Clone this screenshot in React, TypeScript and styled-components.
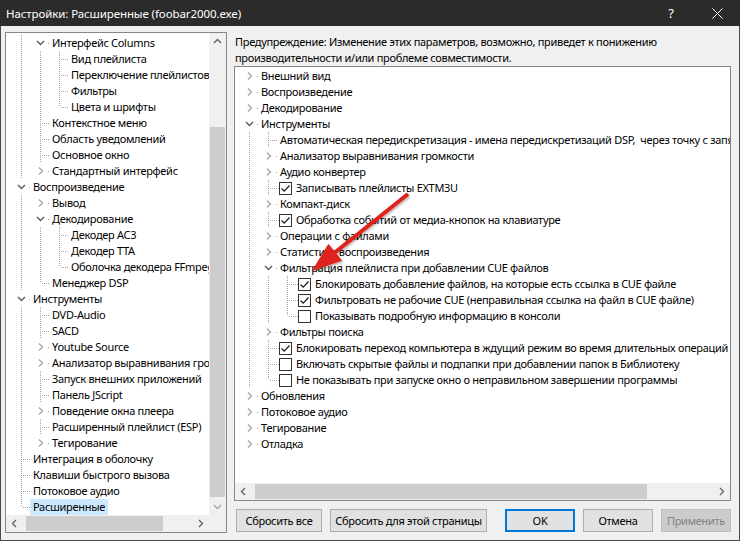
import React from 'react';
import styled, { createGlobalStyle } from 'styled-components';

const FONT = `"Segoe UI", "Noto Sans", "Open Sans", sans-serif`;
const INDENT = 19;

interface RowData {
  t: string;
  l: number;
  open?: boolean;
  closed?: boolean;
  check?: boolean;
  checked?: boolean;
  selected?: boolean;
}

interface GuideRow extends RowData {
  lines: boolean[];
  hasNext: boolean;
  first: boolean;
}

const leftRows: RowData[] = [
  { t: 'Интерфейс Columns', l: 1, open: true },
  { t: 'Вид плейлиста', l: 2 },
  { t: 'Переключение плейлистов', l: 2 },
  { t: 'Фильтры', l: 2 },
  { t: 'Цвета и шрифты', l: 2 },
  { t: 'Контекстное меню', l: 1 },
  { t: 'Область уведомлений', l: 1 },
  { t: 'Основное окно', l: 1 },
  { t: 'Стандартный интерфейс', l: 1, closed: true },
  { t: 'Воспроизведение', l: 0, open: true },
  { t: 'Вывод', l: 1, closed: true },
  { t: 'Декодирование', l: 1, open: true },
  { t: 'Декодер AC3', l: 2 },
  { t: 'Декодер TTA', l: 2 },
  { t: 'Оболочка декодера FFmpeg', l: 2 },
  { t: 'Менеджер DSP', l: 1 },
  { t: 'Инструменты', l: 0, open: true },
  { t: 'DVD-Audio', l: 1 },
  { t: 'SACD', l: 1 },
  { t: 'Youtube Source', l: 1, closed: true },
  { t: 'Анализатор выравнивания громкости', l: 1, closed: true },
  { t: 'Запуск внешних приложений', l: 1 },
  { t: 'Панель JScript', l: 1 },
  { t: 'Поведение окна плеера', l: 1, closed: true },
  { t: 'Расширенный плейлист (ESP)', l: 1 },
  { t: 'Тегирование', l: 1, closed: true },
  { t: 'Интеграция в оболочку', l: 0 },
  { t: 'Клавиши быстрого вызова', l: 0 },
  { t: 'Потоковое аудио', l: 0 },
  { t: 'Расширенные', l: 0, selected: true },
];

const rightRows: RowData[] = [
  { t: 'Внешний вид', l: 0, closed: true },
  { t: 'Воспроизведение', l: 0, closed: true },
  { t: 'Декодирование', l: 0, closed: true },
  { t: 'Инструменты', l: 0, open: true },
  { t: 'Автоматическая передискретизация - имена передискретизаций DSP,  через точку с запятой', l: 1 },
  { t: 'Анализатор выравнивания громкости', l: 1, closed: true },
  { t: 'Аудио конвертер', l: 1, closed: true },
  { t: 'Записывать плейлисты EXTM3U', l: 1, check: true, checked: true },
  { t: 'Компакт-диск', l: 1, closed: true },
  { t: 'Обработка событий от медиа-кнопок на клавиатуре', l: 1, check: true, checked: true },
  { t: 'Операции с файлами', l: 1, closed: true },
  { t: 'Статистика воспроизведения', l: 1, closed: true },
  { t: 'Фильтрация плейлиста при добавлении CUE файлов', l: 1, open: true },
  { t: 'Блокировать добавление файлов, на которые есть ссылка в CUE файле', l: 2, check: true, checked: true },
  { t: 'Фильтровать не рабочие CUE (неправильная ссылка на файл в CUE файле)', l: 2, check: true, checked: true },
  { t: 'Показывать подробную информацию в консоли', l: 2, check: true },
  { t: 'Фильтры поиска', l: 1, closed: true },
  { t: 'Блокировать переход компьютера в ждущий режим во время длительных операций', l: 1, check: true, checked: true },
  { t: 'Включать скрытые файлы и подпапки при добавлении папок в Библиотеку', l: 1, check: true },
  { t: 'Не показывать при запуске окно о неправильном завершении программы', l: 1, check: true },
  { t: 'Обновления', l: 0, closed: true },
  { t: 'Потоковое аудио', l: 0, closed: true },
  { t: 'Тегирование', l: 0, closed: true },
  { t: 'Отладка', l: 0, closed: true },
];

// works out which dotted lines each row needs
function withGuides(rows: RowData[]): GuideRow[] {
  return rows.map((r, i) => {
    const hasNextAt = (lvl: number) => {
      for (let j = i + 1; j < rows.length; j++) {
        if (rows[j].l < lvl) return false;
        if (rows[j].l === lvl) return true;
      }
      return false;
    };
    const lines: boolean[] = [];
    for (let k = 0; k < r.l; k++) lines.push(hasNextAt(k));
    return { ...r, lines, hasNext: hasNextAt(r.l), first: i === 0 && r.l === 0 };
  });
}

const GlobalStyle = createGlobalStyle`
  html, body {
    margin: 0;
    padding: 0;
    background: #f0f0f0;
    overflow: hidden;
  }
  body {
    font-family: ${FONT};
    font-size: 11px;
    letter-spacing: -0.3px;
    color: #000;
  }
`;

function Guides({ row, base }: { row: GuideRow; base: number }) {
  const col = (k: number) => base + k * INDENT + 0.5;
  const own = col(row.l);
  const width = base + row.l * INDENT + (row.check ? 11 : 9);
  return (
    <GuideSvg width={width} height={16}>
      <g stroke="#a0a0a0" strokeWidth={1} strokeDasharray="1 1" shapeRendering="crispEdges">
        {row.lines.map((on, k) =>
          on ? <line key={k} x1={col(k)} y1={0} x2={col(k)} y2={16} /> : null
        )}
        <line x1={own} y1={row.first ? 8 : 0} x2={own} y2={row.hasNext ? 16 : 8} />
        <line x1={own + 1} y1={8.5} x2={width} y2={8.5} />
      </g>
      {(row.open || row.closed) && (
        <>
          <rect x={own - 7.5} y={0} width={15} height={16} fill="#fff" />
          {row.open ? (
            <path
              d={`M${own - 3.5} 6 L${own} 9.5 L${own + 3.5} 6`}
              fill="none"
              stroke="#5a5a5a"
              strokeWidth={1.4}
            />
          ) : (
            <path
              d={`M${own - 1.5} 4.5 L${own + 2} 8 L${own - 1.5} 11.5`}
              fill="none"
              stroke="#a8a8a8"
              strokeWidth={1.4}
            />
          )}
        </>
      )}
    </GuideSvg>
  );
}

function Tree({ rows, base }: { rows: RowData[]; base: number }) {
  return (
    <>
      {withGuides(rows).map((row, i) => (
        <Row key={i}>
          <Guides row={row} base={base} />
          {row.check && (
            <CheckBox>
              {row.checked && (
                <svg width="11" height="11" viewBox="0 0 11 11">
                  <path d="M1.5 5.5 L4.2 8.2 L9.5 2.5" fill="none" stroke="#1a1a1a" strokeWidth={1.2} />
                </svg>
              )}
            </CheckBox>
          )}
          <Label $selected={row.selected} $check={row.check}>
            {row.t}
          </Label>
        </Row>
      ))}
    </>
  );
}

function Arrow({ dir }: { dir: 'up' | 'down' | 'left' | 'right' }) {
  const d = {
    up: 'M5 10 L8.5 6.5 L12 10',
    down: 'M5 7 L8.5 10.5 L12 7',
    left: 'M10 5 L6.5 8.5 L10 12',
    right: 'M7 5 L10.5 8.5 L7 12',
  }[dir];
  return (
    <ScrollBtn>
      <svg width="17" height="17" viewBox="0 0 17 17">
        <path d={d} fill="none" stroke={dir === 'down' ? '#a3a3a3' : '#606060'} strokeWidth={1.3} />
      </svg>
    </ScrollBtn>
  );
}

export default function App() {
  return (
    <>
      <GlobalStyle />
      <Window>
        <TitleBar>
          <TitleText>Настройки: Расширенные (foobar2000.exe)</TitleText>
          <TitleButton>?</TitleButton>
          <TitleButton>
            <svg width="11" height="11" viewBox="0 0 11 11">
              <path d="M0.5 0.5 L10.5 10.5 M10.5 0.5 L0.5 10.5" stroke="#fff" strokeWidth={1} />
            </svg>
          </TitleButton>
        </TitleBar>

        <Body>
          <TreeBox>
            <Viewport $top={2}>
              <Tree rows={leftRows} base={15} />
            </Viewport>
            <VScroll>
              <Arrow dir="up" />
              <VThumb $offset={77} $size={370} />
              <Arrow dir="down" />
            </VScroll>
            <HScroll>
              <Arrow dir="left" />
              <HThumb $offset={3} $size={137} />
              <Arrow dir="right" />
            </HScroll>
            <Corner />
          </TreeBox>

          <RightColumn>
            <Warning>
              Предупреждение: Изменение этих параметров, возможно, приведет к понижению
              <br />
              производительности и/или проблеме совместимости.
            </Warning>
            <OptionsBox>
              <Viewport $top={1}>
                <Tree rows={rightRows} base={14} />
              </Viewport>
              <HScroll>
                <Arrow dir="left" />
                <HThumb $offset={3} $size={392} />
                <Arrow dir="right" />
              </HScroll>
            </OptionsBox>
            <ButtonRow>
              <Button $width={86}>Сбросить все</Button>
              <Button $width={157}>Сбросить для этой страницы</Button>
              <Spacer />
              <Button $width={70} $default>OK</Button>
              <Button $width={70}>Отмена</Button>
              <Button $width={70} disabled>Применить</Button>
            </ButtonRow>
          </RightColumn>
        </Body>

        <PointerArrow width="115" height="95" viewBox="0 0 115 95">
          <defs>
            <filter id="sh" x="-20%" y="-20%" width="140%" height="140%">
              <feDropShadow dx="1" dy="1.5" stdDeviation="1" floodColor="#000" floodOpacity="0.3" />
            </filter>
          </defs>
          <g filter="url(#sh)" fill="#e0231c" stroke="#e0231c">
            <line x1="107" y1="9" x2="32" y2="69" strokeWidth="4" />
            <polygon points="12,85 40.5,75.5 27.5,59.5" strokeWidth="1" strokeLinejoin="round" />
          </g>
        </PointerArrow>
      </Window>
    </>
  );
}

const Window = styled.div`
  position: relative;
  box-sizing: border-box;
  width: 740px;
  height: 541px;
  background: #f0f0f0;
  border: 1px solid #4a4a4a;
  border-top: none;
  display: flex;
  flex-direction: column;
`;

const TitleBar = styled.div`
  flex: none;
  height: 26px;
  margin: 0 -1px;
  background: #2b2b2b;
  color: #fff;
  display: flex;
  align-items: center;
`;

const TitleText = styled.div`
  flex: 1;
  padding-left: 6px;
  font-size: 11.5px;
  letter-spacing: -0.1px;
`;

const TitleButton = styled.div`
  width: 46px;
  height: 26px;
  display: flex;
  align-items: center;
  justify-content: center;
  font-size: 13px;
`;

const Body = styled.div`
  flex: 1;
  min-height: 0;
  display: flex;
  gap: 7px;
  padding: 6px 8px 7px 4px;
`;

const TreeBox = styled.div`
  box-sizing: border-box;
  width: 222px;
  flex: none;
  border: 1px solid #828790;
  background: #fff;
  display: grid;
  grid-template-columns: 1fr 17px;
  grid-template-rows: 1fr 17px;
  min-height: 0;
`;

const Viewport = styled.div<{ $top: number }>`
  overflow: hidden;
  padding-top: ${({ $top }) => $top}px;
  background: #fff;
  min-width: 0;
  min-height: 0;
`;

const Row = styled.div`
  height: 16px;
  display: flex;
  align-items: center;
  white-space: pre;
`;

const GuideSvg = styled.svg`
  flex: none;
  display: block;
`;

const CheckBox = styled.span`
  box-sizing: border-box;
  flex: none;
  width: 13px;
  height: 13px;
  border: 1px solid #333;
  background: #fff;
  margin-right: 2px;
  display: flex;
  align-items: center;
  justify-content: center;
`;

const Label = styled.span<{ $selected?: boolean; $check?: boolean }>`
  height: 16px;
  line-height: 16px;
  padding: 0 3px 0 ${({ $check }) => ($check ? 2 : 3)}px;
  background: ${({ $selected }) => ($selected ? '#cce8ff' : 'transparent')};
`;

const VScroll = styled.div`
  background: #f0f0f0;
  display: flex;
  flex-direction: column;
  min-height: 0;
`;

const HScroll = styled.div`
  background: #f0f0f0;
  display: flex;
  min-width: 0;
`;

const ScrollBtn = styled.div`
  flex: none;
  width: 17px;
  height: 17px;
  display: flex;
  align-items: center;
  justify-content: center;
  margin-left: auto;
  &:first-child {
    margin-left: 0;
  }
`;

const VThumb = styled.div<{ $offset: number; $size: number }>`
  flex: none;
  margin: ${({ $offset }) => $offset}px 1px auto;
  height: ${({ $size }) => $size}px;
  background: #cdcdcd;
  & + ${ScrollBtn} {
    margin-top: auto;
  }
`;

const HThumb = styled.div<{ $offset: number; $size: number }>`
  flex: none;
  margin: 1px 0 1px ${({ $offset }) => $offset}px;
  width: ${({ $size }) => $size}px;
  background: #cdcdcd;
`;

const Corner = styled.div`
  background: #f0f0f0;
`;

const RightColumn = styled.div`
  flex: 1;
  min-width: 0;
  display: flex;
  flex-direction: column;
`;

const Warning = styled.div`
  padding: 2px 0 0 1px;
  line-height: 16px;
  white-space: nowrap;
`;

const OptionsBox = styled.div`
  box-sizing: border-box;
  flex: 1;
  min-height: 0;
  border: 1px solid #828790;
  background: #fff;
  display: grid;
  grid-template-rows: 1fr 17px;
`;

const ButtonRow = styled.div`
  display: flex;
  gap: 8px;
  margin-top: 8px;
  padding: 0 0 1px 2px;
`;

const Spacer = styled.div`
  flex: 1;
`;

const Button = styled.button<{ $width: number; $default?: boolean }>`
  box-sizing: border-box;
  width: ${({ $width }) => $width}px;
  height: 23px;
  padding: 0;
  font-family: ${FONT};
  font-size: 11px;
  letter-spacing: -0.3px;
  white-space: nowrap;
  color: #000;
  background: #e1e1e1;
  border: ${({ $default }) => ($default ? '2px solid #0078d7' : '1px solid #adadad')};
  &:disabled {
    color: #838383;
    background: #cccccc;
    border-color: #bfbfbf;
  }
`;

const PointerArrow = styled.svg`
  position: absolute;
  left: 300px;
  top: 185px;
  pointer-events: none;
`;
